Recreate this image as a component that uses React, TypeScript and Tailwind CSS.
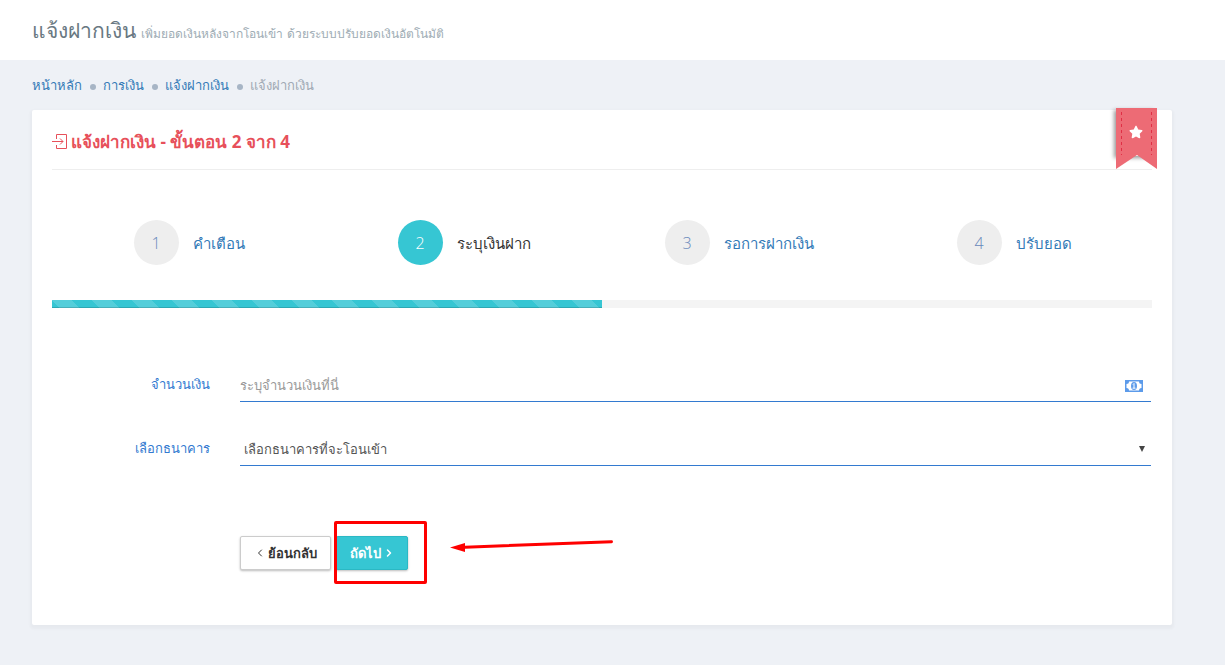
import React, { useState } from 'react';
import { ChevronLeft, ChevronRight } from 'lucide-react';
import { FaStar } from 'react-icons/fa';

interface Step {
    number: number;
    title: string;
}

const steps: Step[] = [
    { number: 1, title: 'คำเตือน' },
    { number: 2, title: 'ระบุเงินฝาก' },
    { number: 3, title: 'รอการฝากเงิน' },
    { number: 4, title: 'ปรับยอด' },
];

const crumbs = ['หน้าหลัก', 'การเงิน', 'แจ้งฝากเงิน'];

const PageHead: React.FC = () => (
    <header className="flex h-[60px] items-center bg-white px-8 pt-1">
        <h1 className="text-[21px] leading-7 text-[#697882]">
            แจ้งฝากเงิน <small className="text-[12px] text-[#9eacb4]">เพิ่มยอดเงินหลังจากโอนเข้า ด้วยระบบปรับยอดเงินอัตโนมัติ</small>
        </h1>
    </header>
);

const Breadcrumb: React.FC = () => (
    <nav className="flex h-[50px] items-center px-8 text-[13px] leading-5">
        {crumbs.map((crumb) => (
            <React.Fragment key={crumb}>
                <a href="#" className="text-[#337ab7]">{crumb}</a>
                <span className="mt-1 mr-[7px] ml-2 size-[6px] rounded-full bg-[#a7b5c5]" />
            </React.Fragment>
        ))}
        <span className="text-[#a0a9b4]">แจ้งฝากเงิน</span>
    </nav>
);

const Ribbon: React.FC = () => (
    <div className="absolute -top-[2px] right-[15px]">
        <div className="absolute top-0 left-0 h-12 w-[39px] shadow-[-2px_2px_4px_rgba(0,0,0,0.4)]" />
        <svg className="relative" width="41" height="61" viewBox="0 0 41 61">
            <path d="M0 0h41v61L21 47 0 61z" fill="#ed6b75" />
            <path d="M5.5 4v43M35.5 4v43" stroke="#e02f45" strokeDasharray="3 3" />
        </svg>
        <FaStar className="absolute top-[17px] left-[13px] size-[14px] text-white" />
    </div>
);

const StepList: React.FC<{ current: number }> = ({ current }) => (
    <ol className="grid grid-cols-4 pt-[50px] pb-[35px]">
        {steps.map((step) => (
            <li key={step.number} className="flex justify-center">
                <a href="#" className="flex items-center gap-[14px] pr-px text-[15px] leading-6">
                    <span className={`flex size-[45px] items-center justify-center rounded-full text-[16px] font-light ${step.number === current ? 'bg-[#36c6d3] text-white' : 'bg-[#eeeeee] text-[#6788bb]'}`}>
                        {step.number}
                    </span>
                    <span className={step.number === current ? 'text-[#333333]' : 'text-[#337ab7]'}>{step.title}</span>
                </a>
            </li>
        ))}
    </ol>
);

const ProgressBar: React.FC<{ percent: number }> = ({ percent }) => (
    <div className="h-2 bg-[#f4f4f4]">
        <div
            className="h-full bg-[#36c6d3] bg-[linear-gradient(45deg,rgba(255,255,255,.15)_25%,transparent_25%,transparent_50%,rgba(255,255,255,.15)_50%,rgba(255,255,255,.15)_75%,transparent_75%,transparent)] bg-[length:40px_40px] shadow-[inset_0_-1px_0_rgba(0,0,0,0.15)]"
            style={{ width: `${percent}%` }}
        />
    </div>
);

const DepositForm: React.FC = () => {
    const [amount, setAmount] = useState('');

    return (
        <form className="pt-[60px] pb-[55px] text-[13px] leading-5">
            <div className="grid grid-cols-[158px_1fr] gap-[30px] pr-px">
                <label htmlFor="amount" className="pt-[6px] text-right text-[#337ad0]">จำนวนเงิน</label>
                <div className="flex h-[34px] items-center border-b border-[#337ad0] pr-2">
                    <input
                        id="amount" type="text"
                        placeholder="ระบุจำนวนเงินที่นี่"
                        value={amount}
                        onChange={(e) => setAmount(e.target.value)}
                        className="min-w-0 flex-1 outline-none placeholder:text-[#999999]"
                    />
                    <svg className="mt-[2px]" width="18" height="12" viewBox="0 0 18 12">
                        <path d="M0 0h18v12H0z" fill="#5c9bea" />
                        <path d="M4 1.500h10a2.500 2.500 0 0 0 2.500 2.500v4a2.500 2.500 0 0 0-2.500 2.500H4a2.500 2.500 0 0 0-2.500-2.500V4A2.500 2.500 0 0 0 4 1.500z" fill="#fff" />
                        <ellipse cx="9" cy="6" rx="3" ry="4" fill="#5c9bea" />
                        <path d="M8 4.500l1-1v4.500M7.500 8.200h3" stroke="#fff" fill="none" />
                    </svg>
                </div>
                <label htmlFor="bank" className="pt-[6px] text-right text-[#337ad0]">เลือกธนาคาร</label>
                <div className="relative h-[34px] border-b border-[#337ad0]">
                    <select id="bank" className="size-full appearance-none pl-1 text-[#555555] outline-none">
                        <option>เลือกธนาคารที่จะโอนเข้า</option>
                    </select>
                    <svg className="pointer-events-none absolute top-[14px] right-[6px]" width="6" height="6" viewBox="0 0 6 6">
                        <path d="M0 0h6L3 6z" fill="#444" />
                    </svg>
                </div>
            </div>
            <div className="relative mt-[70px] ml-[188px] flex gap-[5px]">
                <button type="button" className="flex h-[34px] w-[91px] items-center justify-center gap-[2px] rounded-[2px] border border-[#cccccc] bg-white font-semibold text-[#333333] shadow-[0_1px_3px_rgba(0,0,0,0.1),0_1px_2px_rgba(0,0,0,0.18)]">
                    <ChevronLeft size={12} /> ย้อนกลับ
                </button>
                <button type="submit" className="flex h-[34px] w-[72px] items-center justify-center gap-[2px] rounded-[2px] border border-[#2bb8c4] bg-[#36c6d3] font-bold text-white shadow-[0_1px_3px_rgba(0,0,0,0.1),0_1px_2px_rgba(0,0,0,0.18)]">
                    ถัดไป <ChevronRight size={12} strokeWidth={3} />
                </button>
                <div className="pointer-events-none absolute -top-[15px] left-[94px] h-[63px] w-[93px] rounded-[2px] border-3 border-[#fe0000]" />
                <svg className="pointer-events-none absolute top-1 left-[210px]" width="164" height="12" viewBox="0 0 164 12">
                    <path d="M15 7.2L161.500 1.700" stroke="#fe0000" strokeWidth="3" strokeLinecap="round" />
                    <path d="M0 7.500L15 3v9z" fill="#fe0000" />
                </svg>
            </div>
        </form>
    );
};

export default function App() {
    return (
        <div className="min-h-screen bg-[#eef1f6] pb-10 font-['Open_Sans','Noto_Sans',sans-serif]">
            <PageHead />
            <Breadcrumb />
            <main className="relative mr-[53px] ml-8 rounded-[2px] bg-white px-5 shadow-[0_2px_3px_2px_rgba(0,0,0,0.03)]">
                <Ribbon />
                <div className="flex h-[60px] items-center gap-[3px] border-b border-[#eeeeee] pt-1 text-[#e7505a]">
                    <svg width="16" height="16" viewBox="0 0 16 16" fill="none" stroke="currentColor">
                        <path d="M4.500 5V.5h10v14h-10V11M0 7.500h11M8 4.500l3 3-3 3" />
                    </svg>
                    <h2 className="text-[17px] leading-6 font-bold">แจ้งฝากเงิน - ขั้นตอน 2 จาก 4</h2>
                </div>
                <StepList current={2} />
                <ProgressBar percent={50} />
                <DepositForm />
            </main>
        </div>
    );
}
